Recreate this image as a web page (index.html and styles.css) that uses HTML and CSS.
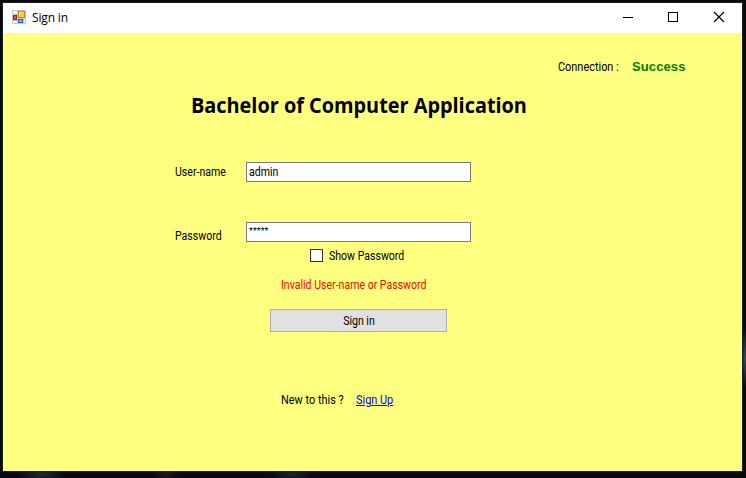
FILE: index.html
```html
<!DOCTYPE html>
<html lang="en">
<head>
<meta charset="utf-8">
<title>Sign in</title>
<link rel="stylesheet" href="styles.css">
</head>
<body>
<div class="window">
  <header class="titlebar">
    <svg class="app-icon" width="14" height="14" viewBox="0 0 14 14" shape-rendering="crispEdges">
      <rect width="14" height="14" fill="#c3c6ca"/>
      <path d="M1 1h4v3H1zM1 11h4v2H1zM12 9h1v4h-1z" fill="#fff"/>
      <rect x="6" y="1" width="7" height="7" fill="#c58a16"/>
      <rect x="7" y="2" width="5" height="5" fill="#fbc83c"/>
      <path d="M7 2h4v1H8v2H7z" fill="#ffe695"/>
      <rect x="1" y="5" width="4" height="5" fill="#9f2424"/>
      <rect x="2" y="6" width="2" height="3" fill="#d65448"/>
      <rect x="6" y="9" width="5" height="4" fill="#3268c8"/>
      <rect x="7" y="10" width="3" height="2" fill="#73a8f5"/>
    </svg>
    <span class="caption">Sign in</span>
    <svg class="controls" width="102" height="12" viewBox="0 0 102 12" fill="none" stroke="#000">
      <path d="M0 6.5h10"/>
      <rect x="45.5" y="1.5" width="9" height="9"/>
      <path d="M91 1l10 10M101 1L91 11" stroke-width="1.2"/>
    </svg>
  </header>
  <main class="form">
    <div class="status"><span class="connection"><span class="narrow wider">Connection :</span></span><b class="success">Success</b></div>
    <h1 class="heading">Bachelor of Computer Application</h1>
    <div class="row user"><label class="name" for="u"><span class="narrow">User-name</span></label><div class="field"><input class="value narrow" id="u" value="admin"></div></div>
    <div class="row pass"><label class="name low"><span class="narrow">Password</span></label><div class="field stars">*****</div></div>
    <div class="show"><span class="box"></span><span class="narrow">Show Password</span></div>
    <div class="error"><span class="narrow">Invalid User-name or Password</span></div>
    <button class="submit"><span class="narrow centered">Sign in</span></button>
    <div class="signup"><span class="new"><span class="narrow wider">New to this ?</span></span><a class="link narrow wider" href="#">Sign Up</a></div>
  </main>
</div>
</body>
</html>
```

FILE: styles.css
```css
* { box-sizing: border-box; }
body {
  margin: 0;
  height: 478px;
  padding: 3px 4px 7px 3px;
  overflow: hidden;
  background:
    radial-gradient(ellipse 5px 30px at 746px 358px, #34527c, transparent),
    radial-gradient(ellipse 24px 10px at 42px 474px, #252a38, transparent),
    radial-gradient(ellipse 14px 8px at 166px 474px, #221a1a, transparent),
    radial-gradient(ellipse 24px 8px at 292px 474px, #1c2436, transparent),
    #07090d;
  font: 12px/16px Roboto, sans-serif;
  color: #000;
}
.window { width: 739px; height: 468px; background: #ffff80; box-shadow: 0 0 0 1px #1b2022; }
.titlebar { display: flex; align-items: center; height: 30px; background: #fff; padding: 0 17px 0 9px; }
.app-icon { position: relative; top: -1px; }
.caption { margin-left: 6px; font: 12px/16px "Open Sans", sans-serif; letter-spacing: -0.15px; }
.controls { position: relative; top: -1px; margin-left: auto; }
.form { display: flex; flex-direction: column; align-items: flex-start; }
.narrow { display: inline-block; transform: scaleX(0.88); transform-origin: 0 50%; white-space: nowrap; }
.wider { transform: scaleX(0.91); }
.centered { transform-origin: 50% 50%; }
.status { display: flex; margin: 26px 0 0 555px; height: 16px; }
.connection { width: 74px; white-space: nowrap; }
.success { font: bold 13px/16px "Liberation Sans", sans-serif; letter-spacing: 0.1px; color: #008000; }
.heading { margin: 15px 0 0 188px; font: bold 21px/30px "Open Sans", sans-serif; transform: scaleX(0.946); transform-origin: 0 50%; white-space: nowrap; }
.row { display: flex; margin-left: 172px; height: 20px; }
.user { margin-top: 42px; }
.pass { margin-top: 40px; }
.name { width: 71px; padding-top: 2px; }
.low { padding-top: 6px; }
.field { width: 225px; height: 20px; padding: 0 2px; border: 1px solid #7a7a7a; background: #fff; overflow: hidden; }
.value { width: 240px; height: 18px; padding: 0; border: 0; background: transparent; font: inherit; color: #000; outline: 0; }
.stars { font-size: 9px; line-height: 17px; }
.show { display: flex; margin: 6px 0 0 307px; height: 16px; }
.box { width: 13px; height: 13px; border: 1px solid #333; background: #fff; margin: 1px 6px 0 0; }
.error { margin: 13px 0 0 278px; color: #f00; }
.submit { width: 177px; height: 23px; margin: 16px 0 0 267px; padding: 0; border: 1px solid #adadad; background: #e1e1e1; font: inherit; color: #000; }
.signup { display: flex; margin: 60px 0 0 278px; }
.new { width: 75px; }
.link { color: #00f; text-decoration: underline; }
```
